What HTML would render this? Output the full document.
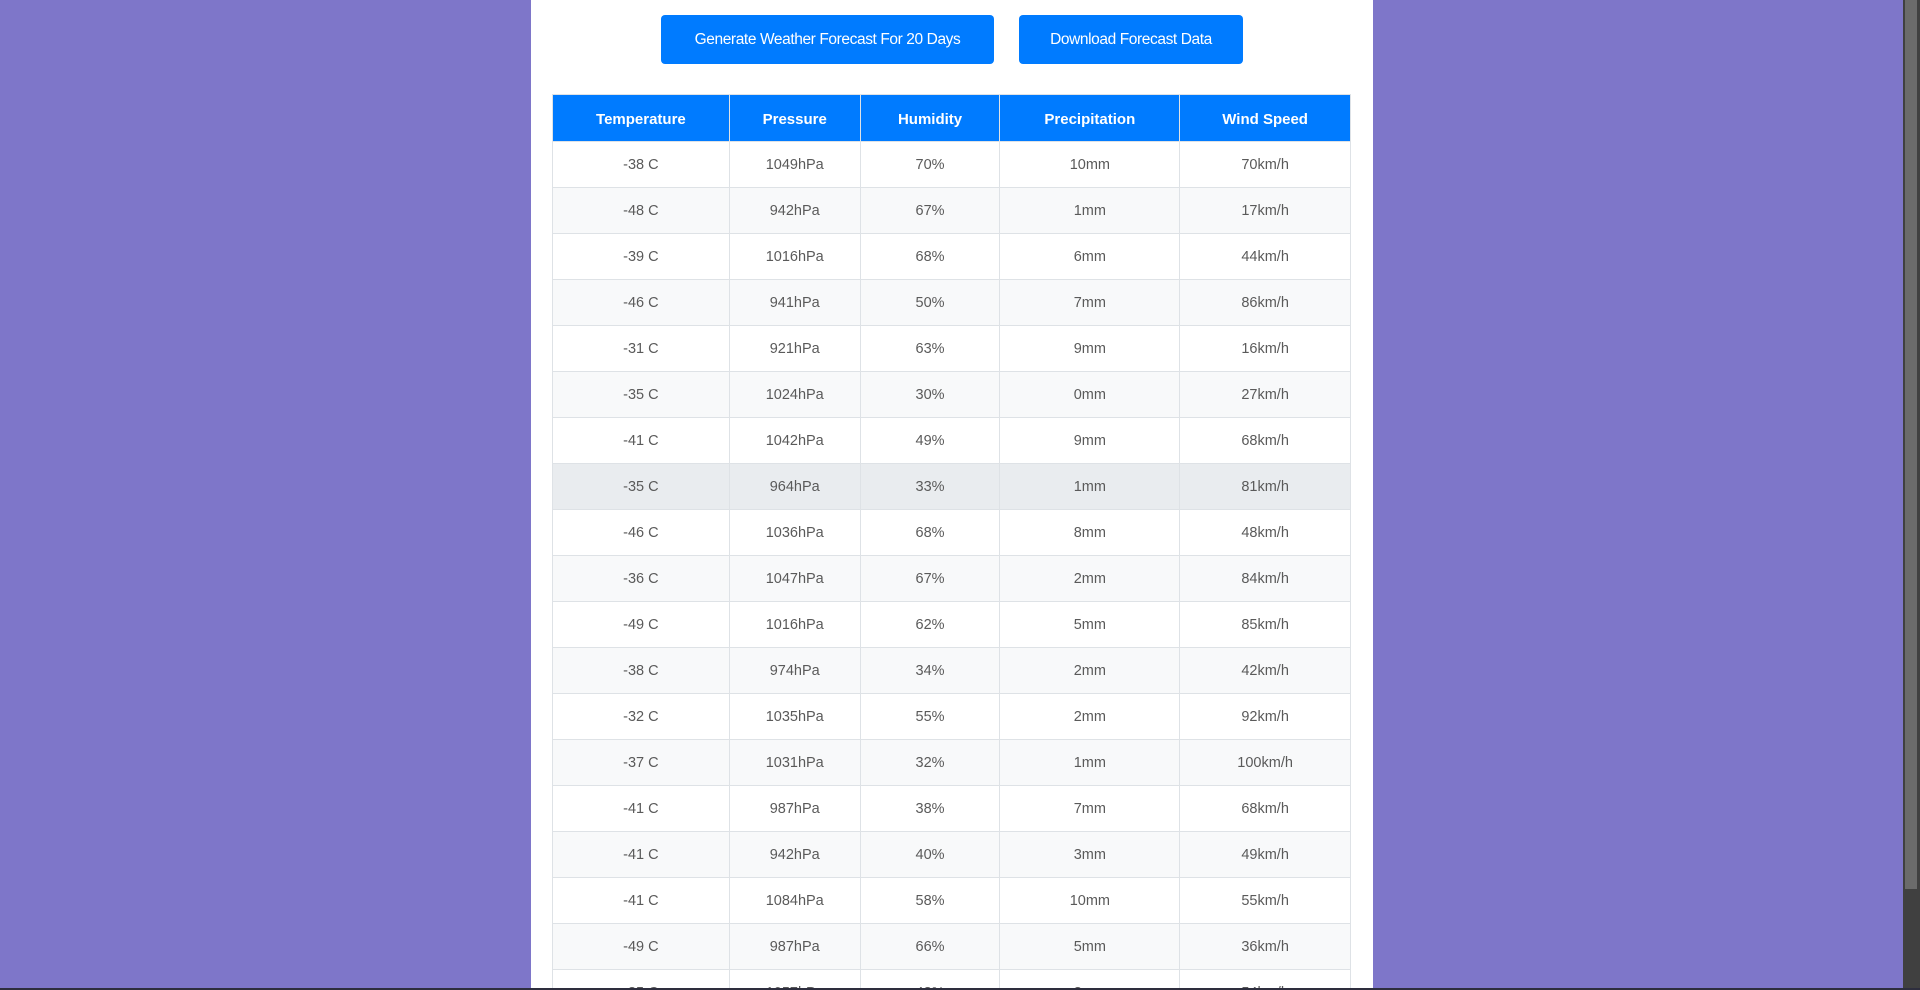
<!DOCTYPE html>
<html><head><style>
html,body{margin:0;padding:0;}
body{width:1920px;height:990px;overflow:hidden;background:#7e76c9;position:relative;font-family:"Liberation Sans",sans-serif;}
.panel{position:absolute;left:531px;top:0;width:842px;height:988px;background:#fff;overflow:hidden;}
.btn{position:absolute;top:15px;height:49px;background:#007bff;color:#fff;border-radius:4px;font-size:15.5px;line-height:49px;text-align:center;letter-spacing:-0.4px;}
table{position:absolute;left:21px;top:94px;width:799px;border-collapse:collapse;}
th{background:#007bff;color:#fff;font-weight:bold;font-size:15px;height:43px;border:1px solid #dee2e6;padding:3px 0 0 0;}
td{height:45px;border:1px solid #dee2e6;text-align:center;font-size:14.5px;color:#5a5a5a;padding:0;}
tr:nth-child(even) td{background:#f8f9fa;}
tr.h td{background:#e9ecef;}
.sb{position:absolute;left:1903px;top:0;width:17px;height:988px;background:#404040;}
.th{position:absolute;left:1905px;top:0;width:12px;height:889px;background:#6b6b6b;}
.bar{position:absolute;left:0;top:988px;width:1920px;height:2px;background:#2e2e3e;}
</style></head><body>
<div class="panel">
<div class="btn" style="left:130px;width:333px;">Generate Weather Forecast For 20 Days</div>
<div class="btn" style="left:488px;width:224px;">Download Forecast Data</div>
<table>
<colgroup><col style="width:177px"><col style="width:131px"><col style="width:140px"><col style="width:180px"><col style="width:171px"></colgroup>
<thead><tr><th>Temperature</th><th>Pressure</th><th>Humidity</th><th>Precipitation</th><th>Wind Speed</th></tr></thead>
<tbody>
<tr><td>-38 C</td><td>1049hPa</td><td>70%</td><td>10mm</td><td>70km/h</td></tr>
<tr><td>-48 C</td><td>942hPa</td><td>67%</td><td>1mm</td><td>17km/h</td></tr>
<tr><td>-39 C</td><td>1016hPa</td><td>68%</td><td>6mm</td><td>44km/h</td></tr>
<tr><td>-46 C</td><td>941hPa</td><td>50%</td><td>7mm</td><td>86km/h</td></tr>
<tr><td>-31 C</td><td>921hPa</td><td>63%</td><td>9mm</td><td>16km/h</td></tr>
<tr><td>-35 C</td><td>1024hPa</td><td>30%</td><td>0mm</td><td>27km/h</td></tr>
<tr><td>-41 C</td><td>1042hPa</td><td>49%</td><td>9mm</td><td>68km/h</td></tr>
<tr class="h"><td>-35 C</td><td>964hPa</td><td>33%</td><td>1mm</td><td>81km/h</td></tr>
<tr><td>-46 C</td><td>1036hPa</td><td>68%</td><td>8mm</td><td>48km/h</td></tr>
<tr><td>-36 C</td><td>1047hPa</td><td>67%</td><td>2mm</td><td>84km/h</td></tr>
<tr><td>-49 C</td><td>1016hPa</td><td>62%</td><td>5mm</td><td>85km/h</td></tr>
<tr><td>-38 C</td><td>974hPa</td><td>34%</td><td>2mm</td><td>42km/h</td></tr>
<tr><td>-32 C</td><td>1035hPa</td><td>55%</td><td>2mm</td><td>92km/h</td></tr>
<tr><td>-37 C</td><td>1031hPa</td><td>32%</td><td>1mm</td><td>100km/h</td></tr>
<tr><td>-41 C</td><td>987hPa</td><td>38%</td><td>7mm</td><td>68km/h</td></tr>
<tr><td>-41 C</td><td>942hPa</td><td>40%</td><td>3mm</td><td>49km/h</td></tr>
<tr><td>-41 C</td><td>1084hPa</td><td>58%</td><td>10mm</td><td>55km/h</td></tr>
<tr><td>-49 C</td><td>987hPa</td><td>66%</td><td>5mm</td><td>36km/h</td></tr>
<tr><td>-35 C</td><td>1057hPa</td><td>43%</td><td>3mm</td><td>54km/h</td></tr>
</tbody></table>
</div>
<div class="sb"></div><div class="th"></div>
<div class="bar"></div>
</body></html>
